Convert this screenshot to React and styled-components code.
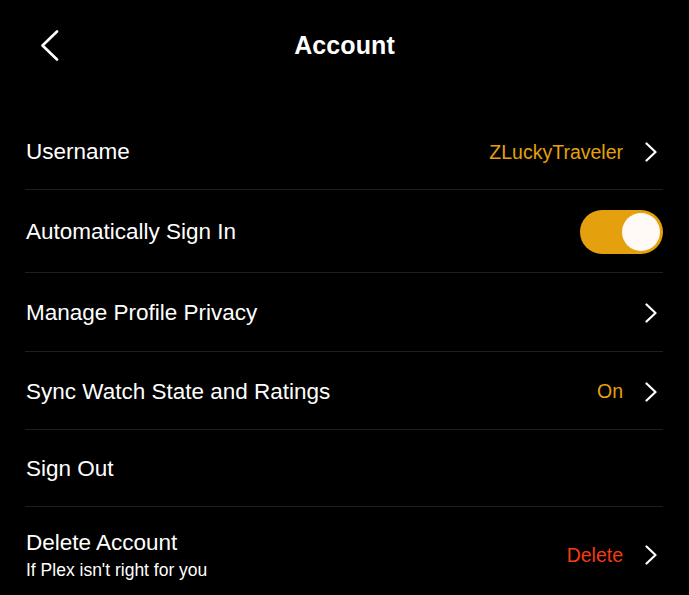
import styled, { createGlobalStyle } from "styled-components";

const GlobalStyle = createGlobalStyle`
  html, body {
    margin: 0;
    padding: 0;
    background: #000;
  }
  body {
    font-family: "Liberation Sans", Arial, sans-serif;
    color: #fff;
  }
`;

const Page = styled.div`
  width: 689px;
  height: 595px;
  overflow: hidden;
  background: #000;
`;

const Header = styled.header`
  height: 90px;
  display: grid;
  grid-template-columns: 1fr auto 1fr;
  align-items: center;
  padding: 0 40px;
`;

const BackButton = styled.button`
  justify-self: start;
  background: none;
  border: 0;
  padding: 0;
  display: flex;
  color: #fff;
`;

const Title = styled.h1`
  margin: 0;
  font-size: 25px;
  font-weight: 700;
  letter-spacing: 0.1px;
`;

const List = styled.ul`
  list-style: none;
  margin: 23px 0 0;
  padding: 0 26px 0 25px;
`;

const Row = styled.li`
  height: ${(p) => p.$h}px;
  display: flex;
  align-items: center;
  justify-content: space-between;
  border-bottom: ${(p) => (p.$last ? "none" : "1px solid #1f1f1f")};
  box-sizing: border-box;
`;

const Labels = styled.div`
  display: flex;
  flex-direction: column;
  gap: 3px;
`;

const Label = styled.span`
  font-size: 22.5px;
  line-height: 26px;
  padding: 2px 0 0 1px;
`;

const Sub = styled.span`
  font-size: 17.5px;
  line-height: 22px;
  padding-left: 1px;
`;

const Trail = styled.div`
  display: flex;
  align-items: center;
  gap: 22px;
`;

const Value = styled.span`
  font-size: 19.5px;
  padding-top: 2px;
  color: ${(p) => (p.$danger ? "#f63b10" : "#e5a00d")};
`;

const Chevron = styled.svg`
  width: 12px;
  height: 20px;
  margin: 2px 6px 0 0;
  display: block;
`;

const Toggle = styled.div`
  width: 83px;
  height: 44px;
  border-radius: 22px;
  margin-top: 2px;
  background: ${(p) => (p.$on ? "#e5a00d" : "#3a3a3a")};
  display: flex;
  align-items: center;
  justify-content: ${(p) => (p.$on ? "flex-end" : "flex-start")};
  padding: 0 3px;
  box-sizing: border-box;
`;

const Knob = styled.div`
  width: 38px;
  height: 38px;
  border-radius: 50%;
  background: #fffaf6;
`;

function ChevronRight() {
  return (
    <Chevron viewBox="0 0 12 20" fill="none">
      <polyline points="1.5,1.5 10.5,10 1.5,18.5" stroke="#fff" strokeWidth="2.2" strokeLinecap="round" strokeLinejoin="round" />
    </Chevron>
  );
}

export default function App() {
  return (
    <Page>
      <GlobalStyle />
      <Header>
        <BackButton>
          <svg width="20" height="31" viewBox="0 0 20 31" fill="none">
            <polyline points="17,1.5 2.5,15.5 17,29.5" stroke="#fff" strokeWidth="2.6" strokeLinecap="round" strokeLinejoin="round" />
          </svg>
        </BackButton>
        <Title>Account</Title>
        <span />
      </Header>
      <List>
        <Row $h={77}>
          <Label>Username</Label>
          <Trail>
            <Value>ZLuckyTraveler</Value>
            <ChevronRight />
          </Trail>
        </Row>
        <Row $h={83}>
          <Label>Automatically Sign In</Label>
          <Toggle $on>
            <Knob />
          </Toggle>
        </Row>
        <Row $h={79}>
          <Label>Manage Profile Privacy</Label>
          <Trail>
            <ChevronRight />
          </Trail>
        </Row>
        <Row $h={78}>
          <Label>Sync Watch State and Ratings</Label>
          <Trail>
            <Value>On</Value>
            <ChevronRight />
          </Trail>
        </Row>
        <Row $h={77}>
          <Label>Sign Out</Label>
        </Row>
        <Row $h={94} $last>
          <Labels>
            <Label>Delete Account</Label>
            <Sub>If Plex isn't right for you</Sub>
          </Labels>
          <Trail>
            <Value $danger>Delete</Value>
            <ChevronRight />
          </Trail>
        </Row>
      </List>
    </Page>
  );
}
